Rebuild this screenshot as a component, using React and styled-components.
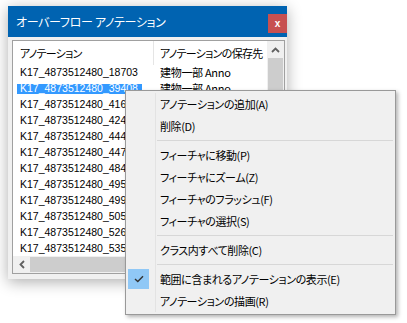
import React from 'react';
import styled, { createGlobalStyle } from 'styled-components';

const Global = createGlobalStyle`
  html, body { margin: 0; padding: 0; background: #ffffff; }
  body { width: 407px; height: 323px; overflow: hidden; font-family: "Noto Sans CJK JP", sans-serif; }
  * { box-sizing: border-box; }
`;

const Desktop = styled.div`
  position: relative;
  width: 407px;
  height: 323px;
  overflow: hidden;
  background: #ffffff;
`;

const Window = styled.div`
  position: absolute;
  left: 8px;
  top: 6px;
  width: 279px;
  height: 273px;
  display: flex;
  flex-direction: column;
  background: #f0f0f0;
  box-shadow: 0 3px 14px rgba(0, 0, 0, 0.32);
`;

const TitleBar = styled.div`
  flex: none;
  height: 31px;
  background: #0063b1;
  display: flex;
  align-items: center;
  padding-left: 8px;
`;

const Title = styled.div`
  flex: 1;
  color: #ffffff;
  font-family: "Noto Sans CJK JP", sans-serif;
  font-size: 12px;
  font-feature-settings: "palt";
  letter-spacing: -0.3px;
  white-space: nowrap;
`;

const CloseButton = styled.div`
  align-self: flex-end;
  margin-bottom: 4px;
  width: 19px;
  height: 19px;
  background: #c75050;
  color: #ffffff;
  font-family: "Liberation Sans", sans-serif;
  font-weight: bold;
  font-size: 10px;
  display: flex;
  align-items: center;
  justify-content: center;
  line-height: 1;
`;

const Body = styled.div`
  flex: 1;
  display: flex;
  padding: 3px 2px 5px 4px;
  min-height: 0;
`;

const ListBox = styled.div`
  flex: 1;
  border: 1px solid #a0a0a0;
  background: #ffffff;
  display: grid;
  grid-template-columns: 1fr 17px;
  grid-template-rows: 1fr 17px;
  overflow: hidden;
`;

const Content = styled.div`
  overflow: hidden;
  display: flex;
  flex-direction: column;
`;

const HeaderRow = styled.div`
  flex: none;
  height: 24px;
  display: flex;
`;

const HeaderCell = styled.div`
  flex: ${p => (p.$w ? 'none' : '1')};
  width: ${p => (p.$w ? `${p.$w}px` : 'auto')};
  display: flex;
  align-items: center;
  padding-left: ${p => p.$pad}px;
  border-right: ${p => (p.$divider ? '1px solid #e5e5e5' : 'none')};
  font-family: "Noto Sans CJK JP", sans-serif;
  font-size: 11px;
  font-feature-settings: "palt";
  letter-spacing: -0.7px;
  color: #000000;
  white-space: nowrap;
  overflow: hidden;
`;

const Row = styled.div`
  flex: none;
  height: 16px;
  display: flex;
  align-items: center;
`;

const IdCell = styled.div`
  flex: none;
  width: 141px;
  padding-left: 4px;
  display: flex;
  align-items: center;
  overflow: hidden;
`;

const IdLabel = styled.span`
  display: inline-block;
  height: 12px;
  line-height: 12px;
  padding: 0 4px 0 3px;
  margin-top: -2px;
  background: ${p => (p.$selected ? '#3399ff' : 'transparent')};
  color: ${p => (p.$selected ? '#ffffff' : '#000000')};
  font-family: "Liberation Sans", sans-serif;
  font-size: 10.5px;
  white-space: nowrap;
`;

const StoreCell = styled.div`
  flex: 1;
  padding-left: 6px;
  margin-top: -3px;
  line-height: 16px;
  font-family: "Noto Sans CJK JP", sans-serif;
  font-size: 11px;
  font-feature-settings: "palt";
  letter-spacing: -0.3px;
  white-space: nowrap;
  overflow: hidden;
  color: #000000;
`;

const VScroll = styled.div`
  background: #f0f0f0;
  display: flex;
  flex-direction: column;
`;

const HScroll = styled.div`
  background: #f0f0f0;
  display: flex;
`;

const ArrowButton = styled.div`
  flex: none;
  width: 17px;
  height: 17px;
  display: flex;
  align-items: center;
  justify-content: center;
`;

const VThumb = styled.div`
  flex: none;
  height: 120px;
  margin: 0 1px;
  background: #cdcdcd;
`;

const HThumb = styled.div`
  flex: none;
  width: 200px;
  margin: 1px 0;
  background: #cdcdcd;
`;

const Corner = styled.div`
  background: #f0f0f0;
`;

const Menu = styled.div`
  position: absolute;
  left: 125px;
  top: 90px;
  width: 271px;
  padding: 2px;
  background: #f0f0f0;
  border: 1px solid #999999;
  box-shadow: 2px 2px 4px rgba(0, 0, 0, 0.3);
  display: flex;
  flex-direction: column;
`;

const Gutter = styled.div`
  position: absolute;
  left: 29px;
  top: 2px;
  bottom: 2px;
  width: 1px;
  background: #e3e3e3;
`;

const MenuItem = styled.div`
  position: relative;
  height: 22px;
  display: flex;
  align-items: center;
  padding-left: 32px;
  font-family: "Noto Sans CJK JP", sans-serif;
  font-size: 11px;
  font-feature-settings: "palt";
  letter-spacing: -0.4px;
  color: #000000;
  white-space: nowrap;
`;

const CheckBox = styled.div`
  position: absolute;
  left: 0;
  top: 1px;
  width: 21px;
  height: 20px;
  background: #90c8f6;
  display: flex;
  align-items: center;
  justify-content: center;
`;

const Separator = styled.div`
  height: 7px;
  display: flex;
  align-items: center;
  padding-left: 29px;
  &::after {
    content: "";
    flex: 1;
    height: 1px;
    background: #d7d7d7;
  }
`;

const ids = ['18703', '39408', '416', '424', '444', '447', '484', '495', '499', '505', '526', '535', '541', '548'];

const menu = [
  { t: 'アノテーションの追加(A)' },
  { t: '削除(D)' },
  { sep: true },
  { t: 'フィーチャに移動(P)' },
  { t: 'フィーチャにズーム(Z)' },
  { t: 'フィーチャのフラッシュ(F)' },
  { t: 'フィーチャの選択(S)' },
  { sep: true },
  { t: 'クラス内すべて削除(C)' },
  { sep: true },
  { t: '範囲に含まれるアノテーションの表示(E)', checked: true },
  { t: 'アノテーションの描画(R)' },
];

export default function App() {
  return (
    <Desktop>
      <Global />
      <Window>
        <TitleBar>
          <Title>オーバーフロー アノテーション</Title>
          <CloseButton>x</CloseButton>
        </TitleBar>
        <Body>
          <ListBox>
            <Content>
              <HeaderRow>
                <HeaderCell $w={141} $pad={7} $divider>アノテーション</HeaderCell>
                <HeaderCell $pad={6}>アノテーションの保存先</HeaderCell>
              </HeaderRow>
              {ids.map((id, i) => (
                <Row key={id}>
                  <IdCell>
                    <IdLabel $selected={i === 1}>K17_4873512480_{id}</IdLabel>
                  </IdCell>
                  <StoreCell>建物一部 Anno</StoreCell>
                </Row>
              ))}
            </Content>
            <VScroll>
              <ArrowButton>
                <svg width="9" height="6" viewBox="0 0 9 6">
                  <polyline points="1,5 4.5,1.5 8,5" fill="none" stroke="#606060" strokeWidth="1.8" />
                </svg>
              </ArrowButton>
              <VThumb />
            </VScroll>
            <HScroll>
              <ArrowButton>
                <svg width="6" height="9" viewBox="0 0 6 9">
                  <polyline points="5,1 1.5,4.5 5,8" fill="none" stroke="#606060" strokeWidth="1.8" />
                </svg>
              </ArrowButton>
              <HThumb />
            </HScroll>
            <Corner />
          </ListBox>
        </Body>
      </Window>
      <Menu>
        <Gutter />
        {menu.map((m, i) =>
          m.sep ? (
            <Separator key={i} />
          ) : (
            <MenuItem key={i}>
              {m.checked && (
                <CheckBox>
                  <svg width="10" height="8" viewBox="0 0 10 8">
                    <polyline points="1,4 3.8,6.6 9,1.2" fill="none" stroke="#333333" strokeWidth="1.4" />
                  </svg>
                </CheckBox>
              )}
              {m.t}
            </MenuItem>
          )
        )}
      </Menu>
    </Desktop>
  );
}
